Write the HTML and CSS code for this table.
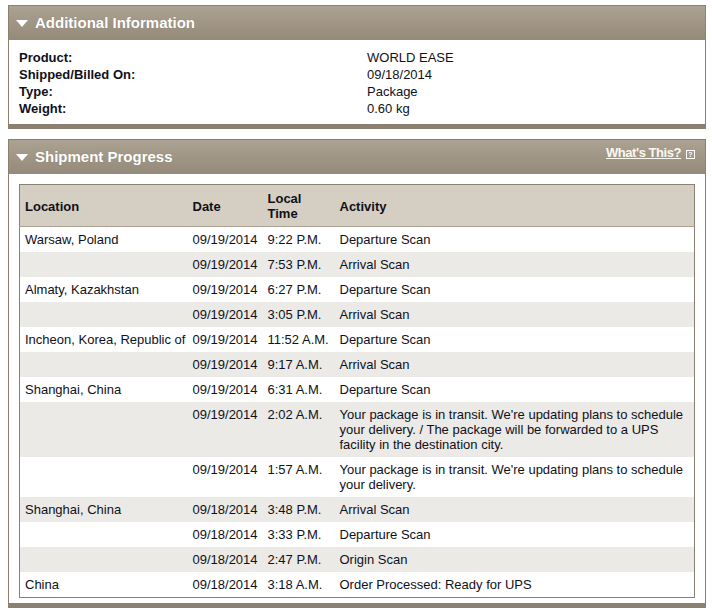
FILE: index.html
```html
<!DOCTYPE html>
<html>
<head>
<meta charset="utf-8">
<link rel="stylesheet" href="styles.css">
</head>
<body>
<section class="panel">
  <div class="panel-head">
    <h2 class="panel-title"><span class="tri"></span>Additional Information</h2>
  </div>
  <div class="panel-body info">
    <dl class="info-list">
      <dt>Product:</dt><dd>WORLD EASE</dd>
      <dt>Shipped/Billed On:</dt><dd>09/18/2014</dd>
      <dt>Type:</dt><dd>Package</dd>
      <dt>Weight:</dt><dd>0.60 kg</dd>
    </dl>
  </div>
</section>

<section class="panel">
  <div class="panel-head">
    <h2 class="panel-title"><span class="tri"></span>Shipment Progress</h2>
    <a class="whats" href="#">What's This?</a><span class="qbox">?</span>
  </div>
  <div class="panel-body progress">
    <table class="prog">
      <colgroup><col class="c-loc"><col class="c-date"><col class="c-time"><col></colgroup>
      <thead>
        <tr><th>Location</th><th>Date</th><th>Local<br>Time</th><th>Activity</th></tr>
      </thead>
      <tbody>
        <tr><td>Warsaw, Poland</td><td>09/19/2014</td><td>9:22 P.M.</td><td>Departure Scan</td></tr>
        <tr><td></td><td>09/19/2014</td><td>7:53 P.M.</td><td>Arrival Scan</td></tr>
        <tr><td>Almaty, Kazakhstan</td><td>09/19/2014</td><td>6:27 P.M.</td><td>Departure Scan</td></tr>
        <tr><td></td><td>09/19/2014</td><td>3:05 P.M.</td><td>Arrival Scan</td></tr>
        <tr><td>Incheon, Korea, Republic of</td><td>09/19/2014</td><td>11:52 A.M.</td><td>Departure Scan</td></tr>
        <tr><td></td><td>09/19/2014</td><td>9:17 A.M.</td><td>Arrival Scan</td></tr>
        <tr><td>Shanghai, China</td><td>09/19/2014</td><td>6:31 A.M.</td><td>Departure Scan</td></tr>
        <tr><td></td><td>09/19/2014</td><td>2:02 A.M.</td><td>Your package is in transit. We're updating plans to schedule your delivery. / The package will be forwarded to a UPS facility in the destination city.</td></tr>
        <tr><td></td><td>09/19/2014</td><td>1:57 A.M.</td><td>Your package is in transit. We're updating plans to schedule your delivery.</td></tr>
        <tr><td>Shanghai, China</td><td>09/18/2014</td><td>3:48 P.M.</td><td>Arrival Scan</td></tr>
        <tr><td></td><td>09/18/2014</td><td>3:33 P.M.</td><td>Departure Scan</td></tr>
        <tr><td></td><td>09/18/2014</td><td>2:47 P.M.</td><td>Origin Scan</td></tr>
        <tr><td>China</td><td>09/18/2014</td><td>3:18 A.M.</td><td>Order Processed: Ready for UPS</td></tr>
      </tbody>
    </table>
  </div>
</section>
</body>
</html>
```

FILE: styles.css
```css
* { box-sizing: border-box; }
html, body { background: #fff; }
body {
  margin: 5px 6px 0 8px;
  font-family: "Liberation Sans", Arial, sans-serif;
  font-size: 13px;
  color: #10101a;
}
.panel {
  border: 1px solid #8c8171;
  border-bottom: 5px solid #8c8171;
  margin-bottom: 10px;
  background: #fff;
}
.panel-head {
  height: 34px;
  background: linear-gradient(#aca292, #958a7a);
  display: flex;
  align-items: flex-start;
  padding: 0 10px 0 7px;
}
.panel-title {
  margin: 0;
  flex: 1;
  display: flex;
  align-items: center;
  height: 33px;
  font-size: 15px;
  font-weight: bold;
  color: #fff;
  text-shadow: 0 0 1px rgba(90, 80, 65, 0.35);
}
.tri {
  width: 0;
  height: 0;
  border-left: 6px solid transparent;
  border-right: 6px solid transparent;
  border-top: 7px solid #fff;
  margin-right: 7px;
  margin-top: 1px;
}
.whats {
  margin-top: 5px;
  color: #fbf8f2;
  font-size: 13px;
  text-decoration: underline;
  line-height: 16px;
  font-weight: bold;
  letter-spacing: -0.45px;
}
.qbox {
  margin: 10px 0 0 5px;
  width: 9px;
  height: 9px;
  border: 1px solid #fff;
  color: #fff;
  font-size: 7px;
  font-weight: bold;
  line-height: 7px;
  text-align: center;
}
.info { padding: 9px 10px 7px 10px; }
.info-list {
  margin: 0;
  display: grid;
  grid-template-columns: 348px 1fr;
  line-height: 17px;
}
.info-list dt { font-weight: bold; }
.info-list dd { margin: 0; }
.progress { padding: 10px 10px 5px 10px; }
.prog {
  width: 100%;
  border-collapse: collapse;
  table-layout: fixed;
  border: 1px solid #8c8171;
  line-height: 15px;
}
.c-loc { width: 168px; }
.c-date { width: 75px; }
.c-time { width: 72px; }
.prog th {
  background: #d5cec2;
  text-align: left;
  font-weight: bold;
  padding: 6px 4px 5px 5px;
  border-bottom: 1px solid #aaa192;
  vertical-align: middle;
}
.prog td {
  padding: 5px 4px 5px 5px;
  vertical-align: top;
}
.prog td:nth-child(1), .prog td:nth-child(2), .prog td:nth-child(3) {
  white-space: nowrap;
  padding-right: 0;
}
.prog tbody tr:nth-child(even) td { background: #ebeae6; }
```
